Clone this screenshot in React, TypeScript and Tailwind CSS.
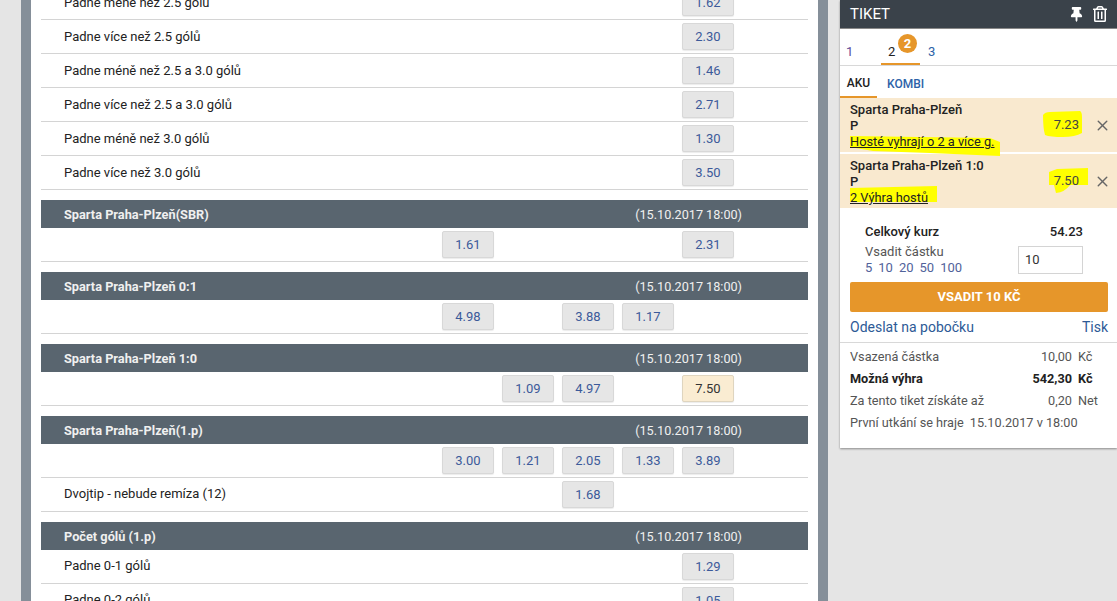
import React from "react";
import { FaThumbtack, FaRegTrashAlt } from "react-icons/fa";
import { X } from "lucide-react";

type Odd = string | null;
type Row = { label?: string; odds: Odd[]; selected?: number };
type Group = { title?: string; date?: string; rows: Row[] };

const groups: Group[] = [
  {
    rows: [
      { label: "Padne méně než 2.5 gólů", odds: [null, null, null, null, "1.62"] },
      { label: "Padne více než 2.5 gólů", odds: [null, null, null, null, "2.30"] },
      { label: "Padne méně než 2.5 a 3.0 gólů", odds: [null, null, null, null, "1.46"] },
      { label: "Padne více než 2.5 a 3.0 gólů", odds: [null, null, null, null, "2.71"] },
      { label: "Padne méně než 3.0 gólů", odds: [null, null, null, null, "1.30"] },
      { label: "Padne více než 3.0 gólů", odds: [null, null, null, null, "3.50"] },
    ],
  },
  {
    title: "Sparta Praha-Plzeň(SBR)",
    date: "(15.10.2017 18:00)",
    rows: [{ odds: ["1.61", null, null, null, "2.31"] }],
  },
  {
    title: "Sparta Praha-Plzeň 0:1",
    date: "(15.10.2017 18:00)",
    rows: [{ odds: ["4.98", null, "3.88", "1.17", null] }],
  },
  {
    title: "Sparta Praha-Plzeň 1:0",
    date: "(15.10.2017 18:00)",
    rows: [{ odds: [null, "1.09", "4.97", null, "7.50"], selected: 4 }],
  },
  {
    title: "Sparta Praha-Plzeň(1.p)",
    date: "(15.10.2017 18:00)",
    rows: [
      { odds: ["3.00", "1.21", "2.05", "1.33", "3.89"] },
      { label: "Dvojtip - nebude remíza (12)", odds: [null, null, "1.68", null, null] },
    ],
  },
  {
    title: "Počet gólů (1.p)",
    date: "(15.10.2017 18:00)",
    rows: [
      { label: "Padne 0-1 gólů", odds: [null, null, null, null, "1.29"] },
      { label: "Padne 0-2 gólů", odds: [null, null, null, null, "1.05"] },
    ],
  },
];

function OddRow({ row, low }: { row: Row; low?: boolean }) {
  return (
    <div className="flex h-[34px] shrink-0 items-start border-b border-[#d4d4d4] pt-[3px]">
      <div className={low ? "h-[26px] flex-1 pl-[23px] text-[13px] leading-[27px] text-[#222]" : "h-[26px] flex-1 pl-[23px] text-[13px] leading-[25px] text-[#222]"}>{row.label}</div>
      <div className="mr-[74px] flex gap-2">
        {row.odds.map((o, i) =>
          o ? (
            <div
              key={i}
              className={
                i === row.selected
                  ? "flex h-[27px] w-[52px] items-center justify-center rounded-[2px] border border-[#dfd5bf] bg-[#faecd2] text-[13px] text-[#333] shadow-[0_1px_1px_rgba(0,0,0,0.08)]"
                  : "flex h-[27px] w-[52px] items-center justify-center rounded-[2px] border border-[#d8d8d8] bg-[#e6e6e6] text-[13px] text-[#3c5a9a] shadow-[0_1px_1px_rgba(0,0,0,0.08)]"
              }
            >
              {o}
            </div>
          ) : (
            <div key={i} className="w-[52px]" />
          )
        )}
      </div>
    </div>
  );
}

function BetRow({
  match,
  odd,
  desc,
  marks,
  top,
}: {
  match: string;
  odd: string;
  desc: string;
  marks: string[];
  top?: boolean;
}) {
  return (
    <div className={top ? "relative z-10 flex h-[54px] bg-[#f9e9cf] pl-2.5 pr-[6px] pt-1 text-[#222]" : "relative flex h-[54px] bg-[#f9e9cf] pl-2.5 pr-[6px] pt-1 text-[#222]"}>
      <svg className="absolute left-0 top-0 overflow-visible" width="277" height="54">
        {marks.map((d, i) => (
          <path key={i} d={d} fill="#ffff00" />
        ))}
      </svg>
      <div className="relative flex-1 text-[12.8px] leading-[16px]">
        <div className="text-[13px] font-medium">{match}</div>
        <div className="text-[13px] font-medium">P</div>
        <div className="underline">{desc}</div>
      </div>
      <div className="relative flex items-center gap-[15px] pb-1 text-[13px]">
        <span className="text-[#444]">{odd}</span>
        <X size={17} strokeWidth={2} className="text-[#666]" />
      </div>
    </div>
  );
}

function SummaryRow({ label, value, unit, bold }: { label: string; value: string; unit: string; bold?: boolean }) {
  return (
    <div className={bold ? "flex h-[22px] items-center font-bold text-[#222]" : "flex h-[22px] items-center text-[#555]"}>
      <div className="flex-1">{label}</div>
      <div className="text-right">{value}</div>
      <div className="ml-[6px] w-[29px]">{unit}</div>
    </div>
  );
}

export default function App() {
  return (
    <div className="flex h-[601px] w-[1117px] overflow-hidden bg-[#e5e5e5] font-['Roboto',sans-serif]">
      <div className="ml-[21px] flex w-[807px] shrink-0 border-x-[10px] border-[#858f99] bg-white">
        <div className="-mt-[14px] flex w-full flex-col pl-[10px] pr-[10px]">
          {groups.map((g, i) => (
            <div key={i} className="mb-2.5 shrink-0">
              {g.title && (
                <div className="flex h-7 items-center justify-between bg-[#59656f] pl-[23px] pr-[66px] pt-[2px] text-[#f0f0f0]">
                  <span className="text-[12.75px] font-bold">{g.title}</span>
                  <span className="text-[12.65px]">{g.date}</span>
                </div>
              )}
              {g.rows.map((r, j) => (
                <OddRow key={j} row={r} low={!g.title} />
              ))}
            </div>
          ))}
        </div>
      </div>

      <div className="ml-3 h-[448px] w-[277px] shrink-0 bg-white shadow-[0_1px_2px_rgba(0,0,0,0.4)]">
        <div className="flex h-[29px] items-center justify-between border-b border-[#888] bg-[#3a424a] pl-2.5 pr-[9px] text-white">
          <span className="text-[15px]">TIKET</span>
          <div className="flex items-center gap-2">
            <FaThumbtack size={15} />
            <FaRegTrashAlt size={16} />
          </div>
        </div>

        <div className="flex h-[37px] border-b border-[#d8d8d8] text-[13px]">
          <div className="w-[41px] pl-[6px] pt-[15px] leading-4 text-[#5b4a9a]">1</div>
          <div className="relative h-[36px] w-[39px] border-b-2 border-[#e6962a] pl-[7px] pt-[15px] leading-4 text-[#222]">
            2
            <span className="absolute left-[17px] top-[5px] flex h-[19px] w-[19px] items-center justify-center rounded-full bg-[#e6962a] text-[13px] font-bold text-white">
              2
            </span>
          </div>
          <div className="pl-[8px] pt-[15px] leading-4 text-[#2d62a8]">3</div>
        </div>

        <div className="flex h-[32px] items-end text-[12px] font-medium">
          <div className="flex h-[29px] w-[37px] items-center justify-center border-b-2 border-[#e6962a] text-[#222]">AKU</div>
          <div className="ml-[10px] flex h-[29px] items-center text-[#2d62a8]">KOMBI</div>
        </div>

        <BetRow
          top
          match="Sparta Praha-Plzeň"
          odd="7.23"
          desc="Hosté vyhrají o 2 a více g."
          marks={[
            "M203 17 Q205 14 210 14 L240 13 Q242 14 242 19 L242 35 Q235 39 223 39 Q210 39 205 37 Q203 30 203 17 Z",
            "M10 38 L150 40 L160 44 L160 58 L90 55 L33 53 L10 49 Z",
          ]}
        />
        <div className="h-0.5" />
        <BetRow
          match="Sparta Praha-Plzeň 1:0"
          odd="7.50"
          desc="2 Výhra hostů"
          marks={[
            "M209 18 L217 15 L248 14 L248 31 L230 31 Q225 38 216 39 L214 31 L209 31 Z",
            "M10 34 L97 32 L97 48 L10 48 Z",
          ]}
        />

        <div className="flex h-[35px] items-end justify-between pl-[25px] pr-[34px] text-[13px] font-medium leading-[22px] text-[#222]">
          <span>Celkový kurz</span>
          <span>54.23</span>
        </div>

        <div className="flex h-[39px] items-start justify-between pl-[25px] pr-[34px]">
          <div className="pt-px text-[13px] leading-4 text-[#555]">
            <div>Vsadit částku</div>
            <div className="flex gap-[6px] text-[#51629a]">
              <span>5</span>
              <span>10</span>
              <span>20</span>
              <span>50</span>
              <span>100</span>
            </div>
          </div>
          <div className="mt-[3px] flex h-[28px] w-[65px] items-center border border-[#d4d4d4] pl-[6px] text-[13px] text-[#333]">10</div>
        </div>

        <div className="ml-2.5 mr-[9px] flex h-[30px] items-center justify-center rounded-[2px] bg-[#e6962a] text-[13px] font-bold text-white">
          VSADIT 10 KČ
        </div>

        <div className="flex h-[31px] items-center justify-between border-b border-[#d8d8d8] pl-2.5 pr-[9px] text-[14px] text-[#2d5a96]">
          <span>Odeslat na pobočku</span>
          <span>Tisk</span>
        </div>

        <div className="pl-2.5 pr-[10px] pt-[3px] text-[12.7px]">
          <SummaryRow label="Vsazená částka" value="10,00" unit="Kč" />
          <SummaryRow label="Možná výhra" value="542,30" unit="Kč" bold />
          <SummaryRow label="Za tento tiket získáte až" value="0,20" unit="Net" />
          <div className="flex h-[22px] items-center gap-[6px] text-[#555]">
            <span>První utkání se hraje</span>
            <span>15.10.2017 v 18:00</span>
          </div>
        </div>
      </div>
    </div>
  );
}
